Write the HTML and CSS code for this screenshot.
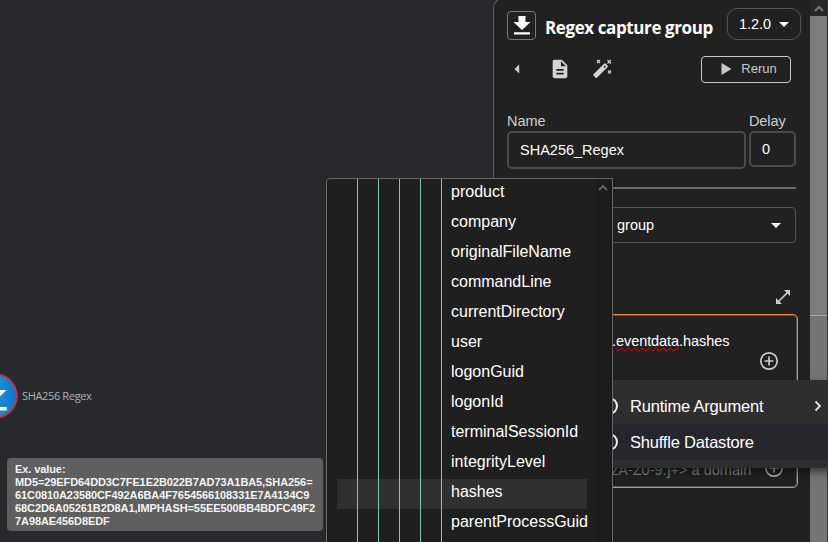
FILE: index.html
```html
<!DOCTYPE html>
<html lang="en">
<head>
<meta charset="utf-8">
<title>Workflow editor</title>
<link rel="stylesheet" href="styles.css">
</head>
<body>
<main class="editor">
  <section class="canvas">
    <div class="node">
      <svg class="node-icon" width="46" height="46" viewBox="0 0 46 46">
        <defs><linearGradient id="blue" x1="0" x2="1"><stop offset="0.5" stop-color="#1b95cf"/><stop offset="1" stop-color="#0f72d2"/></linearGradient></defs>
        <circle cx="23" cy="23" r="21.7" fill="url(#blue)" stroke="#c4343f" stroke-width="2"/>
        <path d="M24 8v9h10.500L23 28.500 12 17h6V8zM12 34h22.700v3.500H12z" fill="#fff"/>
      </svg>
      <span class="node-label">SHA256 Regex</span>
    </div>
  </section>

  <aside class="panel">
    <header class="panel-head">
      <span class="app-icon"><svg width="20" height="22" viewBox="0 0 20 22" fill="#fff"><path d="M6.500 1h7v6h5L10 15 1.500 7h5zM2 17.300h16v2.300H2z"/></svg></span>
      <h1>Regex capture group</h1>
      <button class="version">1.2.0 <i class="caret"></i></button>
    </header>
    <div class="toolbar">
      <svg class="back" width="6" height="10" viewBox="0 0 6 10"><path d="M5.200.5v9L.5 5z" fill="#d0d0d0"/></svg>
      <svg class="doc" width="22" height="22" viewBox="0 0 24 24" fill="#d4d4d4"><path d="M14 2H6c-1.100 0-2 .9-2 2v16c0 1.100.9 2 2 2h12c1.100 0 2-.9 2-2V8zm2 16H8v-2h8zm0-4H8v-2h8zm-3-5V3.500L18.500 9z"/></svg>
      <svg class="wand" width="20" height="20" viewBox="0 0 20 20"><path d="M1.500 15.300 12.300 4.500q.6-.5 1.200 0l2.200 2.200q.5.600 0 1.200L4.900 18.700q-.6.500-1.200 0l-2.200-2.200q-.5-.6 0-1.200z" fill="#d4d4d4"/><path d="m11.500 8 1.400-1.400 1 1-1.400 1.400z" fill="#212121"/><path d="m5 1 3 3m0-3L5 4m10.500-3 3.500 3.500m0-3.500-3.500 3.500m.5 7 3 3m0-3-3 3" stroke="#d4d4d4" stroke-width="1.100"/></svg>
      <button class="rerun"><svg width="11" height="12" viewBox="0 0 11 12"><path d="M.5 0 10.500 6 .5 12z" fill="#c8c8c8"/></svg><span>Rerun</span></button>
    </div>
    <div class="fields">
      <label class="field name"><span>Name</span><div class="input">SHA256_Regex</div></label>
      <label class="field delay"><span>Delay</span><div class="input">0</div></label>
    </div>
    <hr>
    <div class="select"><span>group</span><i class="caret"></i></div>
    <div class="expand"><svg width="16" height="16" viewBox="0 0 16 16"><path d="M3 13 13 3" stroke="#ccc" stroke-width="1.700"/><path d="M9 1h6v6zM1 9v6h6z" fill="#ccc"/></svg></div>
    <div class="param first">
      <span class="value">.<u>eventdata</u>.hashes</span>
      <svg class="plus" width="20" height="20" viewBox="0 0 20 20" fill="none" stroke="#ccc" stroke-width="1.700"><circle cx="10" cy="10" r="8.200"/><path d="M10 5.500v9M5.500 10h9"/></svg>
    </div>
    <div class="param second">
      <span class="value">zA-Z0-9.]+&gt; a domain</span>
      <svg class="plus" width="20" height="20" viewBox="0 0 20 20" fill="none" stroke="#aaa" stroke-width="1.700"><circle cx="10" cy="10" r="8.200"/><path d="M10 5.500v9M5.500 10h9"/></svg>
    </div>
  </aside>
  <div class="scrollbar">
    <div class="scroll-up"><svg width="10" height="7" viewBox="0 0 10 7"><path d="M1 6 5 2l4 4" fill="none" stroke="#77777a" stroke-width="2"/></svg></div>
    <div class="thumb"></div>
    <div class="thumb-lower"></div>
  </div>
</main>

<div class="menu">
  <div class="menu-item"><i class="ring"></i><span>Runtime Argument</span><svg class="chevron" width="8" height="12" viewBox="0 0 8 12"><path d="m1.500 1.500 4.500 4.500-4.500 4.500" fill="none" stroke="#e2e2e2" stroke-width="1.800"/></svg></div>
  <div class="menu-item active"><i class="ring"></i><span>Shuffle Datastore</span></div>
</div>

<div class="submenu">
  <ul>
    <li>product</li><li>company</li><li>originalFileName</li><li>commandLine</li><li>currentDirectory</li><li>user</li><li>logonGuid</li><li>logonId</li><li>terminalSessionId</li><li>integrityLevel</li><li class="hover">hashes</li><li>parentProcessGuid</li><li></li>
  </ul>
  <div class="submenu-track"><svg width="10" height="7" viewBox="0 0 10 7"><path d="M1 6 5 2l4 4" fill="none" stroke="#666" stroke-width="1.900"/></svg></div>
</div>

<div class="tooltip">Ex. value:<br>MD5=29EFD64DD3C7FE1E2B022B7AD73A1BA5,SHA256=<br>61C0810A23580CF492A6BA4F7654566108331E7A4134C9<br>68C2D6A05261B2D8A1,IMPHASH=55EE500BB4BDFC49F2<br>7A98AE456D8EDF</div>
</body>
</html>
```
FILE: styles.css
```css
* { box-sizing: border-box; }
body {
  margin: 0;
  width: 828px;
  height: 542px;
  overflow: hidden;
  background: #27292d;
  color: #fff;
  font-family: "Liberation Sans", Arial, sans-serif;
}
svg { display: block; flex: none; }
button { background: none; color: inherit; font-family: inherit; padding: 0; }
.editor { display: flex; height: 542px; overflow: hidden; }
.canvas { width: 493px; position: relative; overflow: hidden; }
.node { position: absolute; left: -28px; top: 373px; display: flex; align-items: center; gap: 4px; }
.node-label { font: 11px/15px "Open Sans", sans-serif; color: #b0b1b3; white-space: nowrap; letter-spacing: -.35px; padding-bottom: 2px; }

.panel {
  width: 317px;
  height: 560px;
  flex: none;
  background: #212121;
  border: 1px solid #5c5d60;
  border-right: 0;
  border-radius: 10px 0 0 0;
  margin-top: -2px;
  padding: 9px 14px 0 13px;
  display: flex;
  flex-direction: column;
}
.panel-head { display: flex; align-items: flex-start; height: 48px; margin-right: -5px; }
.app-icon {
  width: 29px; height: 29px; margin-top: 3px;
  border: 1px solid #77787a; border-radius: 4px;
  display: flex; align-items: center; justify-content: center;
}
.panel-head h1 {
  margin: 8px 0 0 9px;
  font: bold 17px/24px "Open Sans", sans-serif;
  letter-spacing: -.4px;
  white-space: nowrap;
  width: 182px;
}
.version {
  width: 74px; height: 32px;
  border: 1px solid #555; border-radius: 10px;
  display: flex; align-items: center; justify-content: center; gap: 8px;
  font-size: 14.500px;
}
.caret { border: 5px solid transparent; border-top: 5px solid #fff; border-bottom: 0; }
.toolbar { display: flex; align-items: center; height: 27px; margin-right: 5px; }
.toolbar > svg { margin-bottom: 2px; }
.back { margin-left: 7px; }
.doc { margin-left: 29px; }
.wand { margin-left: 21px; }
.rerun {
  margin-left: auto;
  width: 90px; height: 27px;
  border: 1px solid #c8c8c8; border-radius: 4px;
  display: flex; align-items: center; justify-content: center; gap: 9px;
  font-size: 13px; color: #c8c8c8;
  padding: 0 0 2px 6px;
}
.fields { display: flex; gap: 3px; margin-top: 29px; color: #cfcfcf; }
.field { font-size: 14.500px; }
.field > span { display: block; height: 19px; line-height: 18px; }
.name { width: 239px; }
.delay { width: 47px; }
.input {
  border: 2px solid #4c4c4c; border-radius: 5px;
  color: #fff; display: flex; align-items: center;
  padding-left: 11px; height: 38px;
}
.delay .input { height: 36px; }
.delay > span { letter-spacing: -.1px; }
hr { border: 0; height: 2px; background: #686b70; margin: 18px 0 0; width: 289px; }
.select {
  height: 36px; margin-top: 18px;
  border: 1px solid #555; border-radius: 4px;
  display: flex; align-items: center; justify-content: space-between;
  padding: 0 14px 0 109px; font-size: 14.500px;
}
.expand { display: flex; justify-content: flex-end; padding: 46px 5px 9px 0; }
.param {
  margin-right: -2px; border: 1.500px solid #f28a45; border-radius: 5px;
  box-shadow: inset 0 0 0 1px #55504d; flex: none; font-size: 14.500px;
}
.first { height: 73px; padding: 18px 18px 0 104px; display: flex; flex-direction: column; }
.first .value { line-height: 17px; white-space: nowrap; letter-spacing: -.07px; }
.first u { text-decoration: underline wavy #f00 1px; text-decoration-skip-ink: none; }
.first .plus { align-self: flex-end; margin-top: 1px; }
.second { height: 80px; margin-top: 21px; padding: 49px 13px 0 103px; display: flex; justify-content: space-between; }
.second .value { color: #858585; line-height: 24px; white-space: nowrap; }

.scrollbar { width: 18px; border-right: 1px solid #333436; flex: none; }
.scroll-up { height: 16px; background: #27272a; display: flex; align-items: center; justify-content: center; }
.thumb { height: 300px; background: #7c7c7e; border-bottom: 1px solid #c9977a; }
.thumb-lower { height: 226px; background: #747472; }

.menu {
  position: absolute; left: 596px; top: 380px; width: 240px; height: 88px;
  background: #2e2e2e; padding: 8px 0; box-shadow: 0 4px 8px rgba(0,0,0,.5);
}
.menu-item { height: 36px; display: flex; align-items: center; font-size: 16.500px; letter-spacing: -.2px; padding-right: 14px; }
.menu-item.active { background: #26272c; }
.ring { width: 18px; height: 18px; border: 2px solid #eee; border-radius: 50%; margin-left: 4px; margin-right: 12px; }
.chevron { margin-left: auto; }

.submenu {
  position: absolute; left: 326px; top: 178px; width: 287px; height: 380px;
  border: 1px solid #656565; border-radius: 4px 0 0 0; background: #1f1f1f;
  display: flex; overflow: hidden;
}
.submenu ul { list-style: none; margin: 0; padding: 0 0 0 10px; width: 268px; font-size: 16px; }
.submenu li {
  width: 250px; height: 30px; padding: 0 0 4px 114px; line-height: 26px; white-space: nowrap;
  background: repeating-linear-gradient(90deg, #7cc9b6 0 1px, transparent 1px 21px) 20px 0 / 85px 100% no-repeat;
}
.submenu li.hover { background-color: #303030; }
.submenu-track { width: 17px; background: #1c1c1e; padding: 5px 0 0 3px; }

.tooltip {
  position: absolute; left: 7px; top: 458px; width: 316px; height: 73px;
  background: #5f5f5f; border-radius: 4px; padding: 5px 8px;
  font: bold 11px/13px "Liberation Sans", Arial, sans-serif; white-space: nowrap; color: #f4f4f4;
  letter-spacing: -.09px;
}
```
